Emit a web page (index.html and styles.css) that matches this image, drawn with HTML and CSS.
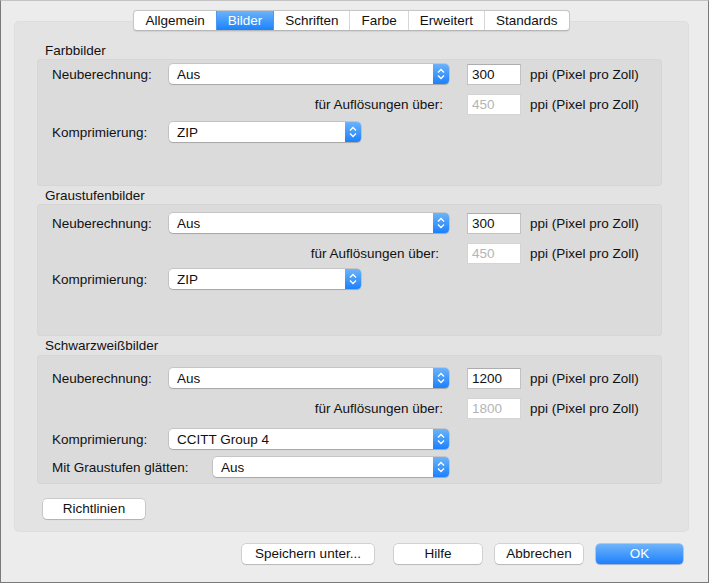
FILE: index.html
```html
<!DOCTYPE html>
<html lang="de">
<head>
<meta charset="utf-8">
<title>Bilder</title>
<link rel="stylesheet" href="styles.css">
</head>
<body>
<div class="window">
  <div class="tabs">
    <div class="tab">Allgemein</div>
    <div class="tab active">Bilder</div>
    <div class="tab">Schriften</div>
    <div class="tab">Farbe</div>
    <div class="tab">Erweitert</div>
    <div class="tab">Standards</div>
  </div>
  <div class="panel">
    <div class="section">
      <div class="title">Farbbilder</div>
      <div class="group g1">
        <div class="row">
          <div class="label">Neuberechnung:</div>
          <div class="select w280"><span>Aus</span><span class="stepper"><svg viewBox="0 0 16 20" width="16" height="20"><path d="M5 8.5 L8 5.5 L11 8.5 M5 11.5 L8 14.5 L11 11.5" fill="none" stroke="#fff" stroke-width="1.3"/></svg></span></div>
          <div class="input">300</div>
          <div class="unit">ppi (Pixel pro Zoll)</div>
        </div>
        <div class="row">
          <div class="rlabel">für Auflösungen über:</div>
          <div class="input disabled">450</div>
          <div class="unit">ppi (Pixel pro Zoll)</div>
        </div>
        <div class="row tight">
          <div class="label">Komprimierung:</div>
          <div class="select w192"><span>ZIP</span><span class="stepper"><svg viewBox="0 0 16 20" width="16" height="20"><path d="M5 8.5 L8 5.5 L11 8.5 M5 11.5 L8 14.5 L11 11.5" fill="none" stroke="#fff" stroke-width="1.3"/></svg></span></div>
        </div>
      </div>
    </div>
    <div class="section">
      <div class="title">Graustufenbilder</div>
      <div class="group g2">
        <div class="row">
          <div class="label">Neuberechnung:</div>
          <div class="select w280"><span>Aus</span><span class="stepper"><svg viewBox="0 0 16 20" width="16" height="20"><path d="M5 8.5 L8 5.5 L11 8.5 M5 11.5 L8 14.5 L11 11.5" fill="none" stroke="#fff" stroke-width="1.3"/></svg></span></div>
          <div class="input">300</div>
          <div class="unit">ppi (Pixel pro Zoll)</div>
        </div>
        <div class="row">
          <div class="rlabel r2">für Auflösungen über:</div>
          <div class="input disabled">450</div>
          <div class="unit">ppi (Pixel pro Zoll)</div>
        </div>
        <div class="row tighter">
          <div class="label">Komprimierung:</div>
          <div class="select w192"><span>ZIP</span><span class="stepper"><svg viewBox="0 0 16 20" width="16" height="20"><path d="M5 8.5 L8 5.5 L11 8.5 M5 11.5 L8 14.5 L11 11.5" fill="none" stroke="#fff" stroke-width="1.3"/></svg></span></div>
        </div>
      </div>
    </div>
    <div class="section">
      <div class="title">Schwarzweißbilder</div>
      <div class="group g3">
        <div class="row">
          <div class="label">Neuberechnung:</div>
          <div class="select w280"><span>Aus</span><span class="stepper"><svg viewBox="0 0 16 20" width="16" height="20"><path d="M5 8.5 L8 5.5 L11 8.5 M5 11.5 L8 14.5 L11 11.5" fill="none" stroke="#fff" stroke-width="1.3"/></svg></span></div>
          <div class="input">1200</div>
          <div class="unit">ppi (Pixel pro Zoll)</div>
        </div>
        <div class="row">
          <div class="rlabel">für Auflösungen über:</div>
          <div class="input disabled">1800</div>
          <div class="unit">ppi (Pixel pro Zoll)</div>
        </div>
        <div class="row loose">
          <div class="label">Komprimierung:</div>
          <div class="select w280"><span>CCITT Group 4</span><span class="stepper"><svg viewBox="0 0 16 20" width="16" height="20"><path d="M5 8.5 L8 5.5 L11 8.5 M5 11.5 L8 14.5 L11 11.5" fill="none" stroke="#fff" stroke-width="1.3"/></svg></span></div>
        </div>
        <div class="row tight">
          <div class="label wide">Mit Graustufen glätten:</div>
          <div class="select w236"><span>Aus</span><span class="stepper"><svg viewBox="0 0 16 20" width="16" height="20"><path d="M5 8.5 L8 5.5 L11 8.5 M5 11.5 L8 14.5 L11 11.5" fill="none" stroke="#fff" stroke-width="1.3"/></svg></span></div>
        </div>
      </div>
    </div>
    <div class="btn richt">Richtlinien</div>
  </div>
  <div class="buttons">
    <div class="btn save">Speichern unter...</div>
    <div class="btn hilfe">Hilfe</div>
    <div class="btn abbr">Abbrechen</div>
    <div class="btn ok">OK</div>
  </div>
</div>
</body>
</html>
```
FILE: styles.css
```css
* { box-sizing: border-box; }
html, body { margin: 0; padding: 0; }
body {
  width: 709px;
  height: 583px;
  font-family: "Liberation Sans", Arial, sans-serif;
  font-size: 13.5px;
  color: #111;
  overflow: hidden;
}
.window {
  width: 709px;
  height: 583px;
  background: #ececec;
  border: 1px solid #7a7a7a;
  border-top-color: #c4c4c4;
  padding-top: 9px;
  display: flex;
  flex-direction: column;
}
.tabs {
  align-self: center;
  display: flex;
  height: 21px;
  margin-bottom: -10px;
  position: relative;
  z-index: 2;
  margin-left: -6px;
  background: #fff;
  border: 1px solid #c6c6c6;
  border-bottom-color: #b6b6b6;
  border-radius: 4px;
  box-shadow: 0 0.5px 1px rgba(0,0,0,0.08);
  overflow: hidden;
}
.tab {
  padding: 0 11px;
  line-height: 19px;
  border-left: 1px solid #d6d6d6;
}
.tab:first-child { border-left: none; }
.tab.active {
  background: linear-gradient(#6bb2fa, #1a83fd);
  color: #fff;
  border-left-color: #4a97f5;
}
.tab.active + .tab { border-left-color: #4a97f5; }
.panel {
  margin: 0 19px 0 13px;
  height: 511px;
  background: #e3e3e3;
  border-radius: 5px;
  box-shadow: inset 0 0 0 1px #dedede;
  padding: 21px 27px 0 23px;
}
.section { margin-top: 1px; }
.section:first-child { margin-top: 0; }
.title {
  height: 17px;
  line-height: 17px;
  padding-left: 8px;
}
.group {
  background: #dbdbdb;
  border-radius: 4px;
  box-shadow: inset 0 0 0 1px #d6d6d6;
  padding-left: 15px;
}
.g1 { height: 127px; padding-top: 4px; }
.g2 { height: 132px; padding-top: 8px; }
.g3 { height: 129px; padding-top: 12px; margin-top: 1px; }
.row {
  display: flex;
  align-items: center;
  height: 22px;
  margin-top: 8px;
}
.row:first-child { margin-top: 0; }
.row.tight { margin-top: 6px; }
.row.tighter { margin-top: 4px; }
.row.loose { margin-top: 9px; }
.label { width: 117px; flex: none; }
.label.wide { width: 161px; }
.rlabel {
  width: 397px;
  text-align: right;
  padding-right: 6px;
  flex: none;
}
.rlabel.r2 { padding-right: 10px; }
.select {
  height: 20px;
  background: #fff;
  border-radius: 4px;
  box-shadow: 0 0 0 0.5px rgba(0,0,0,0.2), 0 1px 1px rgba(0,0,0,0.15);
  display: flex;
  align-items: center;
  justify-content: space-between;
  padding-left: 8px;
  flex: none;
}
.w280 { width: 280px; }
.w192 { width: 192px; }
.w236 { width: 236px; }
.stepper {
  width: 16px;
  height: 20px;
  background: linear-gradient(#6cb3fa, #1b81fb);
  border-radius: 0 4px 4px 0;
  display: block;
}
.stepper svg { display: block; }
.input {
  margin-left: 18px;
  width: 54px;
  height: 21px;
  background: #fff;
  border: 1px solid #c2c2c2;
  border-top-color: #adadad;
  padding-left: 4px;
  line-height: 19px;
  flex: none;
}
.input.disabled {
  color: #b4b4b4;
  border-color: #d4d4d4;
}
.unit { margin-left: 9px; }
.btn {
  height: 20px;
  background: #fff;
  border-radius: 4px;
  box-shadow: 0 0 0 0.5px rgba(0,0,0,0.22), 0 1px 1px rgba(0,0,0,0.12);
  text-align: center;
  line-height: 20px;
}
.richt {
  width: 102px;
  margin: 15px 0 0 6px;
}
.buttons {
  display: flex;
  justify-content: flex-end;
  margin: 12px 25px 0 0;
}
.save { width: 132px; }
.hilfe { width: 88px; margin-left: 20px; }
.abbr { width: 88px; margin-left: 13px; }
.ok {
  width: 87px;
  margin-left: 13px;
  background: linear-gradient(#6db4fa, #1f80fc);
  color: #fff;
  box-shadow: 0 0 0 0.5px rgba(20,90,200,0.5), 0 1px 1px rgba(0,0,0,0.12);
}
```
